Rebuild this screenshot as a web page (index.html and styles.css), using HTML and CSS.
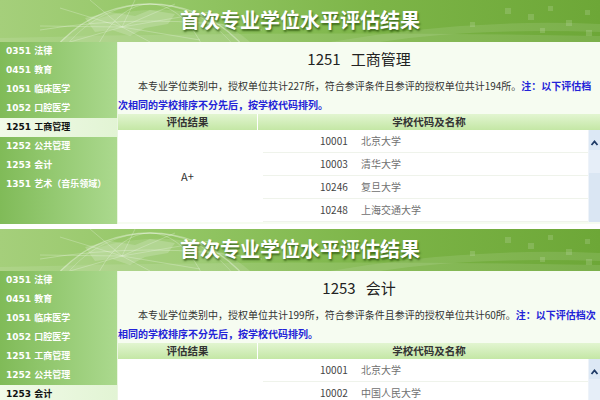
FILE: index.html
```html
<!DOCTYPE html>
<html lang="zh-CN">
<head>
    <meta charset="UTF-8">
    <title>首次专业学位水平评估结果</title>
    <link rel="stylesheet" href="styles.css">
</head>
<body>

<!-- 第一屏：1251 工商管理 -->
<div class="panel">
    <div class="banner">
        <svg class="banner_bg" viewBox="0 0 600 42" width="600" height="42">
            <path d="M60 42 C80 20 120 8 170 10 C200 12 230 24 250 42 Z" fill="#fff" fill-opacity="0.12"/>
            <path d="M85 18 L110 12 L135 16 L150 10 L175 14 L168 24 L145 28 L130 36 L112 30 L95 32 Z" fill="#fff" fill-opacity="0.18"/>
            <circle cx="150" cy="128" r="124" fill="none" stroke="#fff" stroke-opacity="0.35" stroke-width="1.3"/>
            <ellipse cx="150" cy="128" rx="70" ry="124" fill="none" stroke="#fff" stroke-opacity="0.25"/>
            <ellipse cx="150" cy="128" rx="112" ry="124" fill="none" stroke="#fff" stroke-opacity="0.2"/>
            <path d="M40 30 Q150 12 262 30" fill="none" stroke="#fff" stroke-opacity="0.25"/>
            <g stroke="#fff" stroke-opacity="0.3" stroke-width="0.8">
                <line x1="122" y1="27" x2="60" y2="8"/>
                <line x1="122" y1="27" x2="90" y2="0"/>
                <line x1="122" y1="27" x2="135" y2="0"/>
                <line x1="122" y1="27" x2="175" y2="4"/>
                <line x1="122" y1="27" x2="210" y2="12"/>
                <line x1="122" y1="27" x2="200" y2="40"/>
                <line x1="122" y1="27" x2="150" y2="42"/>
                <line x1="122" y1="27" x2="70" y2="42"/>
                <line x1="122" y1="27" x2="40" y2="26"/>
            </g>
            <path d="M330 42 Q470 18 600 24 L600 32 Q470 28 380 42 Z" fill="#fff" fill-opacity="0.1"/>
            <path d="M0 38 Q300 30 600 36 L600 42 L0 42 Z" fill="#fff" fill-opacity="0.1"/>
            <g fill="#fff" fill-opacity="0.14">
                <rect x="505" y="8" width="6" height="6"/>
                <rect x="528" y="14" width="6" height="6"/>
                <rect x="548" y="6" width="5" height="5"/>
                <rect x="566" y="20" width="6" height="6"/>
                <rect x="585" y="10" width="5" height="5"/>
                <rect x="540" y="28" width="5" height="5"/>
                <rect x="470" y="22" width="5" height="5"/>
                <rect x="586" y="30" width="6" height="6"/>
            </g>
        </svg>
        <h1 class="banner_title">首次专业学位水平评估结果</h1>
    </div>
    <div class="main">
        <ul class="menu">
            <li>0351 法律</li>
            <li>0451 教育</li>
            <li>1051 临床医学</li>
            <li>1052 口腔医学</li>
            <li class="on">1251 工商管理</li>
            <li>1252 公共管理</li>
            <li>1253 会计</li>
            <li>1351 艺术（音乐领域）</li>
        </ul>
        <div class="detail">
            <h2 class="detail_title">1251<span class="gap"></span>工商管理</h2>
            <p class="intro">本专业学位类别中，授权单位共计227所，符合参评条件且参评的授权单位共计194所。<b class="note">注：以下评估档次相同的学校排序不分先后，按学校代码排列。</b></p>
            <div class="result">
                <div class="th">评估结果</div>
                <div class="th">学校代码及名称</div>
                <div class="grade">A+</div>
                <div class="schools">
                    <ul class="school_list">
                        <li><span class="code">10001</span><span class="name">北京大学</span></li>
                        <li><span class="code">10003</span><span class="name">清华大学</span></li>
                        <li><span class="code">10246</span><span class="name">复旦大学</span></li>
                        <li><span class="code">10248</span><span class="name">上海交通大学</span></li>
                    </ul>
                    <div class="scrollbar">
                        <div class="scroll_up"><svg width="11" height="20" viewBox="0 0 11 20"><polyline points="2.5,15 5.5,11.5 8.5,15" fill="none" stroke="#1d3a66" stroke-width="1.8"/></svg></div>
                        <div class="scroll_track"></div>
                        <div class="scroll_thumb"></div>
                    </div>
                </div>
            </div>
        </div>
    </div>
</div>

<!-- 第二屏：1253 会计 -->
<div class="panel">
    <div class="banner">
        <svg class="banner_bg" viewBox="0 0 600 42" width="600" height="42">
            <path d="M60 42 C80 20 120 8 170 10 C200 12 230 24 250 42 Z" fill="#fff" fill-opacity="0.12"/>
            <path d="M85 18 L110 12 L135 16 L150 10 L175 14 L168 24 L145 28 L130 36 L112 30 L95 32 Z" fill="#fff" fill-opacity="0.18"/>
            <circle cx="150" cy="128" r="124" fill="none" stroke="#fff" stroke-opacity="0.35" stroke-width="1.3"/>
            <ellipse cx="150" cy="128" rx="70" ry="124" fill="none" stroke="#fff" stroke-opacity="0.25"/>
            <ellipse cx="150" cy="128" rx="112" ry="124" fill="none" stroke="#fff" stroke-opacity="0.2"/>
            <path d="M40 30 Q150 12 262 30" fill="none" stroke="#fff" stroke-opacity="0.25"/>
            <g stroke="#fff" stroke-opacity="0.3" stroke-width="0.8">
                <line x1="122" y1="27" x2="60" y2="8"/>
                <line x1="122" y1="27" x2="90" y2="0"/>
                <line x1="122" y1="27" x2="135" y2="0"/>
                <line x1="122" y1="27" x2="175" y2="4"/>
                <line x1="122" y1="27" x2="210" y2="12"/>
                <line x1="122" y1="27" x2="200" y2="40"/>
                <line x1="122" y1="27" x2="150" y2="42"/>
                <line x1="122" y1="27" x2="70" y2="42"/>
                <line x1="122" y1="27" x2="40" y2="26"/>
            </g>
            <path d="M330 42 Q470 18 600 24 L600 32 Q470 28 380 42 Z" fill="#fff" fill-opacity="0.1"/>
            <path d="M0 38 Q300 30 600 36 L600 42 L0 42 Z" fill="#fff" fill-opacity="0.1"/>
            <g fill="#fff" fill-opacity="0.14">
                <rect x="505" y="8" width="6" height="6"/>
                <rect x="528" y="14" width="6" height="6"/>
                <rect x="548" y="6" width="5" height="5"/>
                <rect x="566" y="20" width="6" height="6"/>
                <rect x="585" y="10" width="5" height="5"/>
                <rect x="540" y="28" width="5" height="5"/>
                <rect x="470" y="22" width="5" height="5"/>
                <rect x="586" y="30" width="6" height="6"/>
            </g>
        </svg>
        <h1 class="banner_title">首次专业学位水平评估结果</h1>
    </div>
    <div class="main">
        <ul class="menu">
            <li>0351 法律</li>
            <li>0451 教育</li>
            <li>1051 临床医学</li>
            <li>1052 口腔医学</li>
            <li>1251 工商管理</li>
            <li>1252 公共管理</li>
            <li class="on">1253 会计</li>
            <li>1351 艺术（音乐领域）</li>
        </ul>
        <div class="detail">
            <h2 class="detail_title">1253<span class="gap"></span>会计</h2>
            <p class="intro">本专业学位类别中，授权单位共计199所，符合参评条件且参评的授权单位共计60所。<b class="note">注：以下评估档次相同的学校排序不分先后，按学校代码排列。</b></p>
            <div class="result">
                <div class="th">评估结果</div>
                <div class="th">学校代码及名称</div>
                <div class="grade">A+</div>
                <div class="schools">
                    <ul class="school_list">
                        <li><span class="code">10001</span><span class="name">北京大学</span></li>
                        <li><span class="code">10002</span><span class="name">中国人民大学</span></li>
                        <li><span class="code">10003</span><span class="name">清华大学</span></li>
                        <li><span class="code">10246</span><span class="name">复旦大学</span></li>
                    </ul>
                    <div class="scrollbar">
                        <div class="scroll_up"><svg width="11" height="20" viewBox="0 0 11 20"><polyline points="2.5,15 5.5,11.5 8.5,15" fill="none" stroke="#1d3a66" stroke-width="1.8"/></svg></div>
                        <div class="scroll_track"></div>
                        <div class="scroll_thumb"></div>
                    </div>
                </div>
            </div>
        </div>
    </div>
</div>

</body>
</html>
```

FILE: styles.css
```css
*{
    margin: 0;
    padding: 0;
}
html,body{
    height: 400px;
    overflow: hidden;
    background: #fff;
}
body{
    font-family: "Noto Sans CJK SC", sans-serif;
}
.panel{
    height: 224px;
    margin-bottom: 5px;
    overflow: hidden;
}

/* 顶部横幅 */
.banner{
    position: relative;
    height: 42px;
    overflow: hidden;
    background: linear-gradient(to right, #a5cf7b 0%, #93c665 30%, #7db548 62%, #6da737 100%);
}
.banner_bg{
    position: absolute;
    left: 0;
    top: 0;
}
.banner_title{
    position: relative;
    text-align: center;
    color: #fff;
    font-size: 20px;
    line-height: 39px;
    font-weight: bold;
    text-shadow: 1px 2px 2px rgba(40,80,10,0.75);
}

.main{
    display: flex;
    height: 182px;
}

/* 左侧菜单 */
.menu{
    flex: none;
    width: 117px;
    border-right: 1px solid #eaf6e0;
    list-style: none;
    background: linear-gradient(to right, #80bb58, #abd98e);
}
.menu li{
    height: 19px;
    line-height: 19px;
    padding-left: 6px;
    color: #fff;
    font-family: "DejaVu Sans", "Noto Sans CJK SC", sans-serif;
    font-size: 9px;
    font-weight: bold;
    white-space: nowrap;
}
.menu li.on{
    color: #111;
    background: linear-gradient(to right, #f1fae9, #e2f4d4);
}

/* 右侧内容 */
.detail{
    flex: 1;
    background: #f6fcf1;
}
.detail_title{
    height: 34px;
    line-height: 34px;
    text-align: center;
    font-size: 15px;
    font-weight: normal;
    color: #222;
}
.detail_title .gap{
    display: inline-block;
    width: 10px;
}
.intro{
    height: 38px;
    font-size: 10px;
    line-height: 19px;
    text-indent: 20px;
    color: #333;
}
.note{
    color: #2323d8;
}

.result{
    display: grid;
    grid-template-columns: 139px 1fr;
    column-gap: 1px;
    background: #fff;
}
.th{
    height: 16px;
    line-height: 16px;
    text-align: center;
    font-size: 10.5px;
    font-weight: bold;
    color: #333;
    background: linear-gradient(#e2f5d1, #c4e7a5);
}
.grade{
    display: flex;
    align-items: center;
    justify-content: center;
    font-size: 11px;
    color: #333;
    background: #fff;
}
.schools{
    display: flex;
    height: 92px;
    overflow: hidden;
    background: #fff;
}
.school_list{
    flex: 1;
    margin-left: 5px;
    list-style: none;
}
.school_list li{
    display: flex;
    height: 22px;
    line-height: 22px;
    padding-left: 57px;
    border-bottom: 1px solid #eff3eb;
    font-size: 10px;
}
.school_list .code{
    width: 41px;
    color: #444;
}
.school_list .name{
    color: #707070;
}

/* 模拟滚动条 */
.scrollbar{
    display: flex;
    flex-direction: column;
    width: 11px;
    border-left: 1px solid #eef3f9;
    background: #e6eef8;
}
.scroll_up{
    height: 20px;
    background: #dce8f5;
}
.scroll_up svg{
    display: block;
}
.scroll_track{
    height: 23px;
}
.scroll_thumb{
    flex: 1;
    background: #dae6f3;
}
```
